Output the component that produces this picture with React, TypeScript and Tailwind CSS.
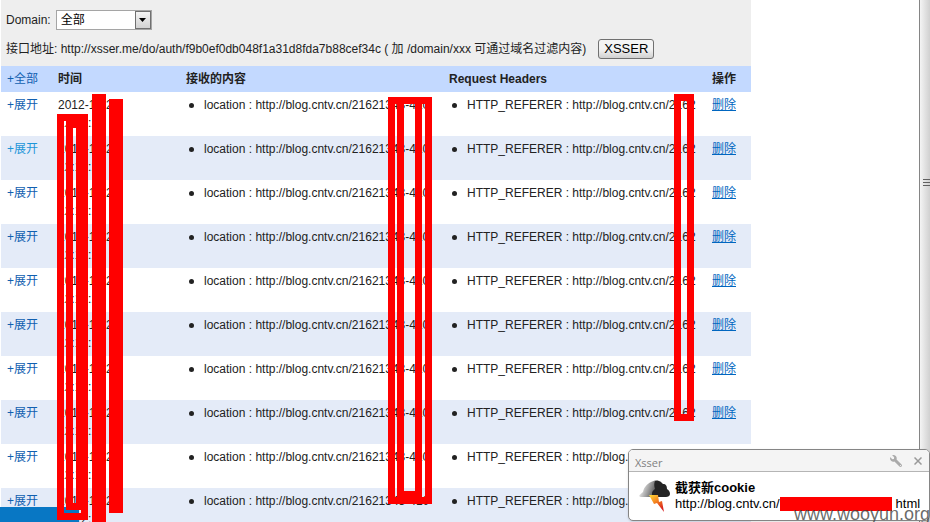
import { clsx } from "clsx";
import { FaWrench } from "react-icons/fa";

interface LogRow {
  id: number;
  date: string;
  time: string;
  location: string;
  referer: string;
  active?: boolean;
}

const rows: LogRow[] = Array.from({ length: 10 }, (_, i) => ({
  id: i + 1,
  date: "2012-12-25",
  time: "12:12:12",
  location: "http://blog.cntv.cn/21621343-410",
  referer: "http://blog.cntv.cn/2162",
  active: i === 1,
}));

function FilterPanel() {
  return (
    <div className="bg-[#eeeeee] px-[5px] pt-2.5 pb-[7px]">
      <div className="flex h-5 items-center gap-[5px]">
        <label htmlFor="domain">Domain:</label>
        <div className="relative">
          <select
            id="domain"
            className="block h-5 w-24 appearance-none border border-[#a5a5a5] bg-white pl-1 text-xs text-black"
          >
            <option>全部</option>
          </select>
          <span className="pointer-events-none absolute inset-y-px right-px flex w-4 items-center justify-center border border-[#707070] bg-linear-to-b from-[#f4f4f4] to-[#d2d2d2]">
            <svg width="7" height="4" viewBox="0 0 7 4" aria-hidden="true">
              <path d="M0 0h7L3.5 4z" fill="#000" />
            </svg>
          </span>
        </div>
      </div>
      <div className="mt-[9px] flex h-5 items-center gap-3 whitespace-nowrap">
        <span>
          接口地址: http://xsser.me/do/auth/f9b0ef0db048f1a31d8fda7b88cef34c ( 加 /domain/xxx 可通过域名过滤内容)
        </span>
        <button
          type="button"
          className="h-5 rounded-[3px] border border-[#707070] bg-linear-to-b from-[#f4f4f4] from-50% to-[#d0d0d0] px-[5px] text-[13px] leading-4 text-black"
        >
          XSSER
        </button>
      </div>
    </div>
  );
}

function Entry({ children }: { children: React.ReactNode }) {
  return (
    <ul className="whitespace-nowrap">
      <li className="flex items-center gap-2.5 pl-[3px]">
        <span className="size-[5px] shrink-0 rounded-full bg-[#222222]" />
        <span>{children}</span>
      </li>
    </ul>
  );
}

function LogTable() {
  return (
    <table className="w-full table-fixed border-collapse text-left">
      <colgroup>
        <col className="w-[51px]" />
        <col className="w-32" />
        <col />
        <col />
        <col className="w-[45px]" />
      </colgroup>
      <thead>
        <tr className="bg-[#c3d9ff]">
          <th className="px-1.5 py-1 font-normal">
            <a href="#all" className="whitespace-nowrap text-[#1160b0]">+全部</a>
          </th>
          <th className="px-1.5 py-1">时间</th>
          <th className="px-1.5 py-1">接收的内容</th>
          <th className="px-1.5 py-1">Request Headers</th>
          <th className="px-1.5 py-1">操作</th>
        </tr>
      </thead>
      <tbody>
        {rows.map((row) => (
          <tr key={row.id} className="bg-white align-top even:bg-[#e4ebf8]">
            <td className="px-1.5 py-1">
              <a
                href={`#row-${row.id}`}
                className={clsx("whitespace-nowrap", row.active ? "text-[#1e96d8]" : "text-[#1160b0]")}
              >
                +展开
              </a>
            </td>
            <td className="px-1.5 py-1">
              {row.date}
              <br />
              {row.time}
            </td>
            <td className="px-1.5 py-1">
              <Entry>location : {row.location}</Entry>
            </td>
            <td className="px-1.5 py-1">
              <Entry>HTTP_REFERER : {row.referer}</Entry>
            </td>
            <td className="px-1.5 py-1">
              <a href={`#delete-${row.id}`} className="whitespace-nowrap text-[#0066c0] underline">
                删除
              </a>
            </td>
          </tr>
        ))}
      </tbody>
    </table>
  );
}

// Red marker boxes drawn over the private parts of the log
function Redactions() {
  return (
    <div aria-hidden="true">
      <div className="absolute top-[114px] left-[57px] h-[406px] w-[31px] border-7 border-[#ff0000]" />
      <div className="absolute top-[121px] left-[66px] h-[389px] w-[17px] border-7 border-[#ff0000]" />
      <div className="absolute top-[94px] left-[92px] h-[428px] w-3.5 bg-[#ff0000]" />
      <div className="absolute top-[99px] left-[109px] h-[414px] w-3.5 bg-[#ff0000]" />
      <div className="absolute top-[97px] left-[388px] h-[407px] w-11 border-7 border-[#ff0000]" />
      <div className="absolute top-[97px] left-[397px] h-[401px] w-[25px] border-7 border-[#ff0000]" />
      <div className="absolute top-[94px] left-[674px] h-[327px] w-5 border-7 border-[#ff0000]" />
    </div>
  );
}

function StormIcon() {
  return (
    <svg width="32" height="34" viewBox="0 0 32 34" className="shrink-0" aria-hidden="true">
      <defs>
        <linearGradient id="cloud" gradientUnits="userSpaceOnUse" x1="2" y1="7" x2="18" y2="13">
          <stop offset="0" stopColor="#eeeeee" />
          <stop offset="0.5" stopColor="#9a9a9a" />
          <stop offset="1" stopColor="#444444" />
        </linearGradient>
        <linearGradient id="bolt" x1="0" y1="0" x2="0.6" y2="1">
          <stop offset="0" stopColor="#ffdf3a" />
          <stop offset="0.45" stopColor="#f58a1f" />
          <stop offset="1" stopColor="#d81e1e" />
        </linearGradient>
      </defs>
      <path d="M0 17c1-2 3-3 4-4 1-5 4-8 8-10 2-1 5-2 8-1v16H4c-2 0-3 0-4-1z" fill="url(#cloud)" />
      <path
        d="M16 2c3-1 6 0 8 3 3 0 4 2 4 5 2 1 3 3 3 5 0 2-2 3-4 3H14c-2-3-1-6 2-8-1-3-1-6 0-8z"
        fill="#242424"
      />
      <path d="M10 16h9l1 7 3-1 2 11-7-9-3 1z" fill="url(#bolt)" />
    </svg>
  );
}

function Toast() {
  return (
    <div
      role="status"
      className="absolute right-0 bottom-px w-[302px] overflow-hidden rounded-[5px] border border-[#858585] bg-white shadow-sm"
    >
      <div className="flex h-[22px] items-center border-b border-[#b5b5b5] bg-[#f4f4f4] pr-[7px] pl-1.5">
        <span className="flex-1 pt-1 font-['Open_Sans',sans-serif] text-[11px] leading-4 text-[#808080]">Xsser</span>
        <button type="button" aria-label="Settings" className="mr-3 text-[#aaaaaa]">
          <FaWrench size={12} className="-scale-x-100" />
        </button>
        <button type="button" aria-label="Close" className="text-[#999999]">
          <svg width="8" height="8" viewBox="0 0 8 8" fill="none" stroke="currentColor" strokeWidth="1.5">
            <path d="M.5.5l7 7M7.5.5l-7 7" />
          </svg>
        </button>
      </div>
      <div className="flex items-start gap-1 pt-[7px] pb-[7px] pl-2.5 text-[13px] leading-4 text-black">
        <StormIcon />
        <div className="pt-px">
          <p className="font-bold">截获新cookie</p>
          <p className="flex items-center whitespace-nowrap">
            http://blog.cntv.cn/
            <span className="h-3.5 w-28 bg-[#ff0000]" />
            <span className="ml-1">html</span>
          </p>
        </div>
      </div>
    </div>
  );
}

function ScrollTrack() {
  return (
    <div className="flex w-[11px] shrink-0 flex-col items-end border-l border-[#858585] bg-linear-to-r from-[#f4f4f4] to-[#d0d0d0] pt-[179px]">
      <div className="flex w-[7px] flex-col gap-0.5">
        <span className="h-px bg-[#606060]" />
        <span className="h-px bg-[#606060]" />
        <span className="h-px bg-[#606060]" />
      </div>
    </div>
  );
}

export default function App() {
  return (
    <div className="relative flex h-screen overflow-hidden bg-white font-['Liberation_Sans','Noto_Sans_CJK_SC',sans-serif] text-xs leading-[18px] text-[#222222]">
      <main className="min-w-0 flex-1 pl-px">
        <div className="w-full max-w-[750px]">
          <FilterPanel />
          <LogTable />
        </div>
      </main>
      <ScrollTrack />
      <div className="absolute bottom-0 left-0 h-[15px] w-[79px] bg-[#0877c4]" />
      <Redactions />
      <Toast />
      <p className="absolute right-0 bottom-0 text-lg leading-4 text-[#444444]/80">www.wooyun.org</p>
    </div>
  );
}
